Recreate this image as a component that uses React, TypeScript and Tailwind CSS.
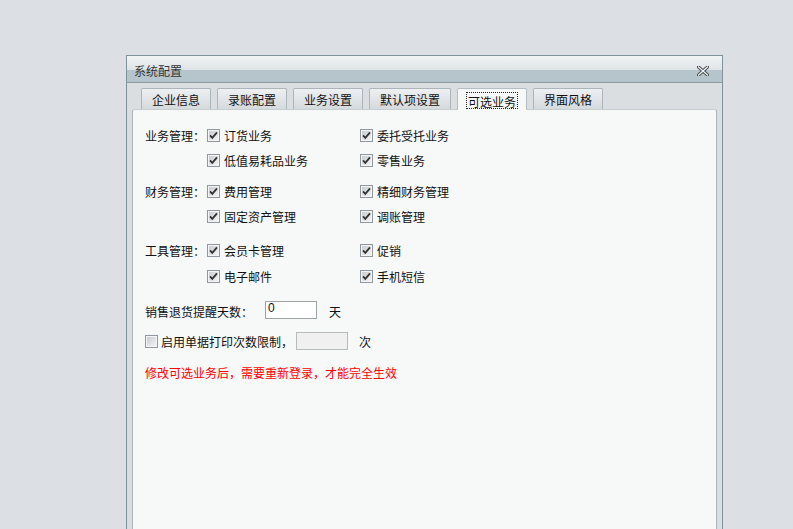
import type { ReactNode } from "react"

const font = "font-['SimSun','Noto_Sans_CJK_SC',sans-serif]"

function CheckBox({ checked = true }: { checked?: boolean }) {
  const id = checked ? "cbOn" : "cbOff"
  return (
    <svg width="13" height="13" viewBox="0 0 13 13" className="shrink-0">
      <defs>
        <linearGradient id={id} x1="0" y1="0" x2="1" y2="1">
          <stop offset="0" stopColor="#c9cdd0" />
          <stop offset="1" stopColor="#f2f3f4" />
        </linearGradient>
      </defs>
      <rect x="0.5" y="0.5" width="12" height="12" fill="#f4f5f6" stroke="#8e989e" />
      <rect x="2" y="2" width="9" height="9" fill={`url(#${id})`} />
      {checked && (
        <path d="M3 6.3 L5.3 8.8 L10 3.3" fill="none" stroke="#333" strokeWidth="1.8" />
      )}
    </svg>
  )
}

function Option({ label }: { label: string }) {
  return (
    <div className="flex items-center gap-[4px]">
      <CheckBox />
      <span className="pt-[1px]">{label}</span>
    </div>
  )
}

function Group({
  title,
  rows,
  className,
}: {
  title: string
  rows: [string, string, number][]
  className?: string
}) {
  return (
    <div className={className}>
      {rows.map(([left, right, h], i) => (
        <div key={left} className="flex items-center" style={{ height: h }}>
          <div className="w-[62px] pt-[1px]">{i === 0 ? title : ""}</div>
          <div className="w-[153px]">
            <Option label={left} />
          </div>
          <Option label={right} />
        </div>
      ))}
    </div>
  )
}

function Tab({ children, width, active }: { children: ReactNode; width: string; active?: boolean }) {
  return (
    <div
      className={
        active
          ? `${width} h-[22px] -mb-px flex items-center justify-center pt-[1px] bg-[#f7f9f9] border border-b-0 border-[#b3bdc2] rounded-t-[2px] relative z-10`
          : `${width} h-[21px] flex items-center justify-center pt-[2px] bg-gradient-to-b from-[#eef0f2] to-[#d5dadd] border border-b-0 border-[#aab4b9] rounded-t-[2px]`
      }
    >
      {active ? (
        <span className="border border-dotted border-[#222] px-[1px] pt-[2px] leading-[13px] h-[17px]">
          {children}
        </span>
      ) : (
        children
      )}
    </div>
  )
}

export default function App() {
  return (
    <div
      className={`w-[793px] h-[529px] overflow-hidden bg-[#dcdfe3] pl-[126px] pt-[55px] text-[12px] text-[#111] ${font}`}
    >
      <div className="w-[597px] h-[520px] border border-[#7f929b] bg-[#dadee1] flex flex-col">
        {/* Title bar */}
        <div className="h-[27px] flex flex-col border-b border-[#8c9ca4] relative">
          <div className="h-[14px] bg-gradient-to-b from-[#f2f4f5] to-[#dde3e6]" />
          <div className="flex-1 bg-[#b5c5cb]" />
          <div className="absolute inset-0 flex items-center justify-between pl-[7px] pr-[13px]">
            <span className="text-[#353535] pt-[3px]">系统配置</span>
            <svg width="12" height="10" viewBox="0 0 12 10" className="mt-[4px]">
              <path d="M1.5 1 L10.5 9 M10.5 1 L1.5 9" stroke="#3d4347" strokeWidth="3.2" strokeLinecap="square" />
              <path d="M1.5 1 L10.5 9 M10.5 1 L1.5 9" stroke="#f4f6f7" strokeWidth="1.3" strokeLinecap="square" />
            </svg>
          </div>
        </div>

        {/* Body */}
        <div className="flex-1 flex flex-col px-[5px] pt-[5px]">
          <div className="flex gap-[6px] pl-[9px] items-end">
            <Tab width="w-[70px]">企业信息</Tab>
            <Tab width="w-[70px]">录账配置</Tab>
            <Tab width="w-[70px]">业务设置</Tab>
            <Tab width="w-[82px]">默认项设置</Tab>
            <Tab width="w-[70px]" active>
              可选业务
            </Tab>
            <Tab width="w-[70px]">界面风格</Tab>
          </div>

          <div className="flex-1 bg-[#f7f9f9] border border-[#a9b5bb] border-t-[#c6ced2] rounded-t-[3px] pl-[12px] pt-[13px]">
            <Group
              title="业务管理："
              rows={[
                ["订货业务", "委托受托业务", 25],
                ["低值易耗品业务", "零售业务", 25],
              ]}
            />
            <Group
              className="mt-[6px]"
              title="财务管理："
              rows={[
                ["费用管理", "精细财务管理", 25],
                ["固定资产管理", "调账管理", 25],
              ]}
            />
            <Group
              className="mt-[8px]"
              title="工具管理："
              rows={[
                ["会员卡管理", "促销", 26],
                ["电子邮件", "手机短信", 27],
              ]}
            />

            <div className="mt-[11px] h-[18px] flex items-center">
              <span className="w-[120px] pt-[4px]">销售退货提醒天数：</span>
              <div className="w-[52px] h-[18px] bg-white border border-[#9ea3a6] leading-[13px] pl-[2px] text-[12px] font-['Liberation_Sans',sans-serif]">
                0
              </div>
              <span className="ml-[12px] pt-[4px]">天</span>
            </div>

            <div className="mt-[13px] h-[18px] flex items-center">
              <CheckBox checked={false} />
              <span className="ml-[3px] w-[135px] pt-[1px]">启用单据打印次数限制，</span>
              <div className="w-[52px] h-[18px] bg-[#f0f0f0] border border-[#b7bbbe]" />
              <span className="ml-[11px] pt-[1px]">次</span>
            </div>

            <div className="mt-[14px] text-[#ff0000]">修改可选业务后，需要重新登录，才能完全生效</div>
          </div>
        </div>
      </div>
    </div>
  )
}
